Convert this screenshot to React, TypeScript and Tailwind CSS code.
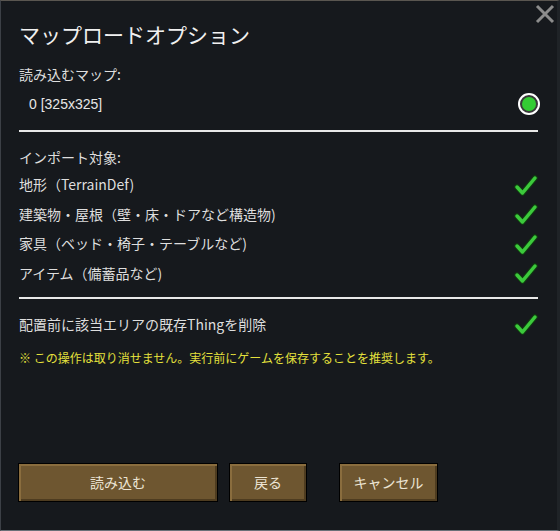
import React from "react";

const Check = () => (
  <svg width="24" height="22" viewBox="0 0 24 22">
    <polyline points="3,13 8.5,19 21,4" fill="none" stroke="#0f3d0f" strokeWidth="5.5" strokeLinecap="round" strokeLinejoin="round" />
    <polyline points="3,13 8.5,19 21,4" fill="none" stroke="#3cc93c" strokeWidth="3.5" strokeLinecap="round" strokeLinejoin="round" />
  </svg>
);

const Row = ({ label }: { label: string }) => (
  <div className="flex items-center justify-between h-[29.5px]">
    <span>{label}</span>
    <Check />
  </div>
);

const Btn = ({ label, w }: { label: string; w: string }) => (
  <button
    className={`${w} h-[39px] border border-black bg-[#6e5630] text-[#ece4d4] text-[14px] shadow-[inset_2px_2px_0_#8a6d3e,inset_-2px_-2px_0_#4e3c20]`}
  >
    {label}
  </button>
);

export default function App() {
  return (
    <div
      className="w-[560px] h-[531px] bg-[#16191d] border-t border-t-[#5a5650] border-l border-l-[#3c4046] border-b border-b-[#6a7078] border-r-[3px] border-r-[#1f2327] relative text-[#dedede] text-[14px] flex flex-col"
      style={{ fontFamily: '"Noto Sans CJK JP", "Noto Sans", sans-serif' }}
    >
      <div className="absolute right-[2px] top-[3px]">
        <svg width="20" height="20" viewBox="0 0 20 20">
          <path d="M2 2 L18 18 M18 2 L2 18" stroke="#8c8c8c" strokeWidth="3" />
        </svg>
      </div>
      <div className="pl-[18px] pr-[16px] flex flex-col">
        <div className="text-[21px] text-[#f0f0f0] mt-[18px] leading-[30px]">マップロードオプション</div>
        <div className="mt-[14px] leading-[22px]">読み込むマップ:</div>
        <div className="flex items-center justify-between mt-[7px] pl-[10px] h-[24px]">
          <span className="text-[#e6e6e6]" style={{ fontFamily: '"Liberation Sans", "Noto Sans CJK JP", sans-serif' }}>0 [325x325]</span>
          <span className="w-[22px] h-[22px] rounded-full border-2 border-white bg-[#3a3a3a] flex items-center justify-center mr-[1px]">
            <span className="w-[14px] h-[14px] rounded-full bg-[#33cc33]" />
          </span>
        </div>
        <div className="h-[2px] bg-[#e8e8e8] mt-[14px] mr-[3px]" />
        <div className="mt-[14px] leading-[22px]">インポート対象:</div>
        <div className="mt-[2px] flex flex-col pr-[3px]">
          <Row label="地形（TerrainDef)" />
          <Row label="建築物・屋根（壁・床・ドアなど構造物)" />
          <Row label="家具（ベッド・椅子・テーブルなど)" />
          <Row label="アイテム（備蓄品など)" />
        </div>
        <div className="h-[2px] bg-[#e8e8e8] mt-[9px] mr-[3px]" />
        <div className="flex items-center justify-between mt-[11px] pr-[3px] h-[28px]">
          <span>配置前に該当エリアの既存Thingを削除</span>
          <Check />
        </div>
        <div className="text-[12px] text-[#e4e03c] mt-[11px] leading-[18px]">※ この操作は取り消せません。実行前にゲームを保存することを推奨します。</div>
      </div>
      <div className="mt-auto mb-[28px] pl-[17px] flex gap-[11px]">
        <Btn label="読み込む" w="w-[200px]" />
        <Btn label="戻る" w="w-[78px]" />
        <div className="w-[10px]" />
        <Btn label="キャンセル" w="w-[99px]" />
      </div>
    </div>
  );
}
